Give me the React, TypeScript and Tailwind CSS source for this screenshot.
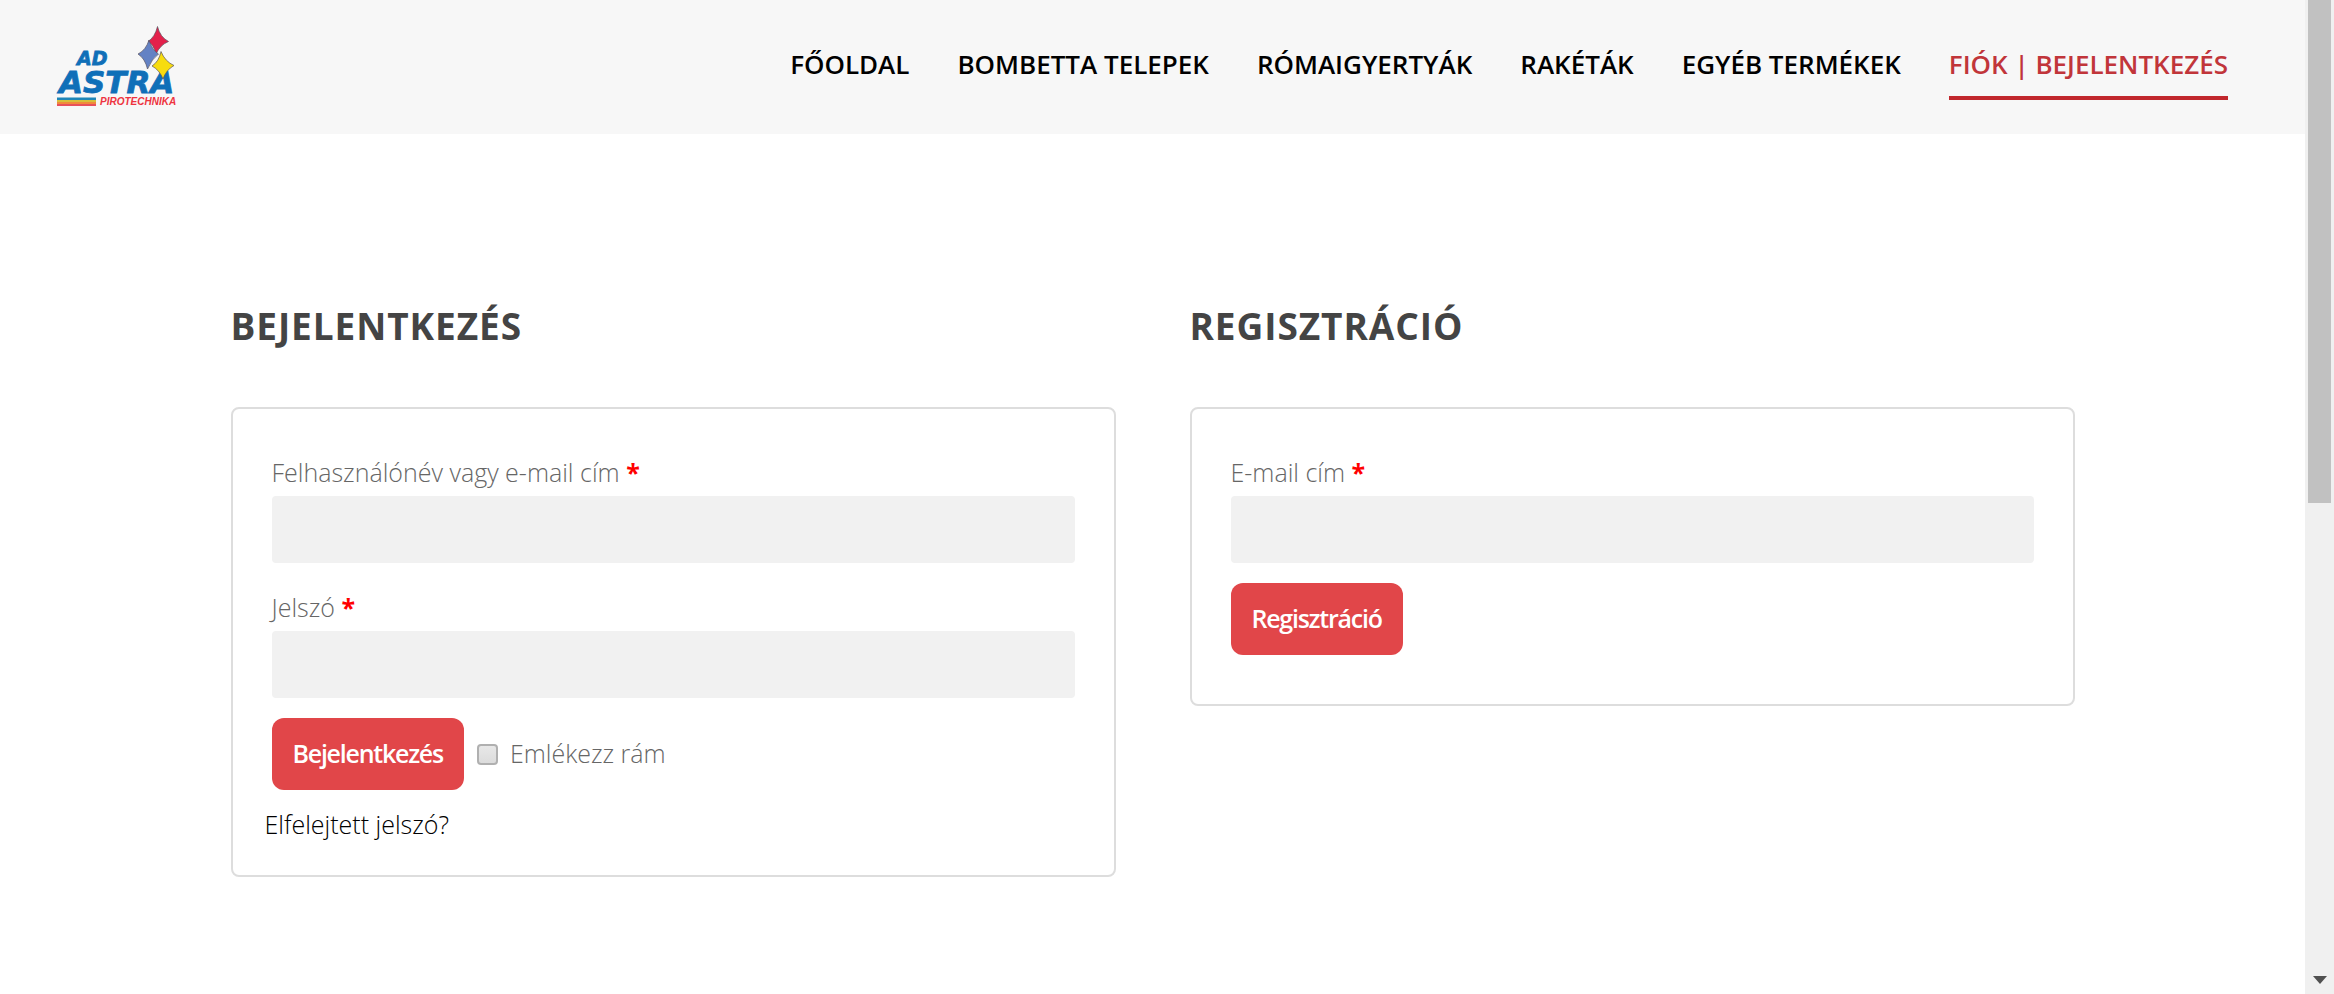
import { ReactNode } from 'react';
import clsx from 'clsx';

const NAV_ITEMS = [
  { label: 'Főoldal' },
  { label: 'Bombetta telepek' },
  { label: 'Rómaigyertyák' },
  { label: 'Rakéták' },
  { label: 'Egyéb termékek' },
  { label: 'Fiók | Bejelentkezés', active: true },
];

function Logo() {
  return (
    <svg width="126" height="84" viewBox="0 0 126 84" role="img" aria-label="Ad Astra Pirotechnika">
      <g fontFamily="'DejaVu Sans', sans-serif" fontWeight="700" fontStyle="italic" fill="#0f6fb8" stroke="#0f6fb8" strokeWidth="0.8">
        <text x="22" y="42" fontSize="19">AD</text>
        <text x="4" y="70" fontSize="31">ASTRA</text>
      </g>
      <text x="45" y="82" fontFamily="'Liberation Sans', sans-serif" fontWeight="700" fontStyle="italic" fontSize="10" fill="#ee3340">
        PIROTECHNIKA
      </text>

      {/* colour stripes */}
      <path d="M2 74.500h39v2.500H2z" fill="#1f86b8" />
      <path d="M2 77h39v2H2z" fill="#d8bf3a" />
      <path d="M2 79h39v2H2z" fill="#f08a3c" />
      <path d="M2 81h39v2H2z" fill="#e8505a" />

      {/* sparks */}
      <g stroke="#5a5560" strokeWidth="0.7" strokeLinejoin="round">
        <path d="M102.500 3.500Q105 14 113.500 18.500Q105 22 101 31Q99 22 93 18.500Q100 14 102.500 3.500z" fill="#e3214b" />
        <path d="M94 17Q97 27 103.500 31Q97 35.500 92.500 46Q90 35.500 83 31Q91 27 94 17z" fill="#6482c4" />
        <path d="M106 28.500Q110 38.500 119 42.500Q111 47 108 56Q104.500 47 97 43Q104 38.500 106 28.500z" fill="#f7dc0f" />
      </g>
    </svg>
  );
}

function Header() {
  return (
    <header className="flex items-center justify-between bg-[#f7f7f7] pt-[23px] pb-[27px] pl-[55px] pr-[77px]">
      <a href="#">
        <Logo />
      </a>
      <nav className="flex gap-12 text-[26px] leading-9 font-semibold uppercase whitespace-nowrap">
        {NAV_ITEMS.map((item) => (
          <a
            key={item.label}
            href="#"
            className={clsx(
              'border-b-4 pt-4 pb-[14px]',
              item.active ? 'border-[#c1272d] text-[#c1353a]' : 'border-transparent text-black',
            )}
          >
            {item.label}
          </a>
        ))}
      </nav>
    </header>
  );
}

function Panel({ title, children }: { title: string; children: ReactNode }) {
  return (
    <section className="flex-1">
      <h2 className="text-[37px] leading-[50px] font-bold tracking-wide text-[#444] uppercase">{title}</h2>
      <form className="mt-[56px] rounded-lg border-2 border-[#ddd] px-8 pt-[39px] pb-[33px]">{children}</form>
    </section>
  );
}

function Field({ id, label, type }: { id: string; label: string; type: string }) {
  return (
    <div className="mb-5 px-[7px]">
      <label htmlFor={id} className="block text-[25px] leading-12 font-light text-[#666]">
        {label} <span className="font-bold text-[#f00]">*</span>
      </label>
      <input id={id} type={type} className="block h-[67px] w-full rounded bg-[#f1f1f1] px-4 text-2xl" />
    </div>
  );
}

function SubmitButton({ children }: { children: ReactNode }) {
  return (
    <button type="button" className="h-[72px] rounded-xl bg-[#e14649] px-[21px] text-[25px] font-semibold tracking-tighter text-white">
      {children}
    </button>
  );
}

function ScrollTrack() {
  return (
    <div className="sticky top-0 flex h-screen w-[29px] flex-col items-center justify-between bg-[#f0f0f0] pb-[10px]">
      <div className="h-[503px] w-[23px] bg-[#c1c1c1]" />
      <svg width="14" height="8" viewBox="0 0 14 8">
        <path d="M0 0h14L7 8z" fill="#505050" />
      </svg>
    </div>
  );
}

export default function App() {
  return (
    <div className="flex min-h-screen bg-white font-['Open_Sans',sans-serif]">
      <div className="min-w-0 flex-1">
        <Header />
        <main className="mx-auto flex w-4/5 items-start gap-[74px] pt-[167px]">
          <Panel title="Bejelentkezés">
            <Field id="username" label="Felhasználónév vagy e-mail cím" type="text" />
            <Field id="password" label="Jelszó" type="password" />
            <div className="flex items-center px-[7px]">
              <SubmitButton>Bejelentkezés</SubmitButton>
              <label className="ml-[13px] flex items-center gap-3 text-[25px] font-light text-[#666]">
                <input
                  type="checkbox"
                  className="size-[21px] appearance-none rounded-sm border-2 border-[#b0b0b0] bg-linear-to-b from-[#e8e8e8] to-[#dcdcdc]"
                />
                Emlékezz rám
              </label>
            </div>
            <a href="#" className="mt-4 inline-block text-[25px] leading-9 font-light text-black">
              Elfelejtett jelszó?
            </a>
          </Panel>
          <Panel title="Regisztráció">
            <Field id="email" label="E-mail cím" type="email" />
            <div className="px-[7px] pb-4">
              <SubmitButton>Regisztráció</SubmitButton>
            </div>
          </Panel>
        </main>
      </div>
      <ScrollTrack />
    </div>
  );
}
